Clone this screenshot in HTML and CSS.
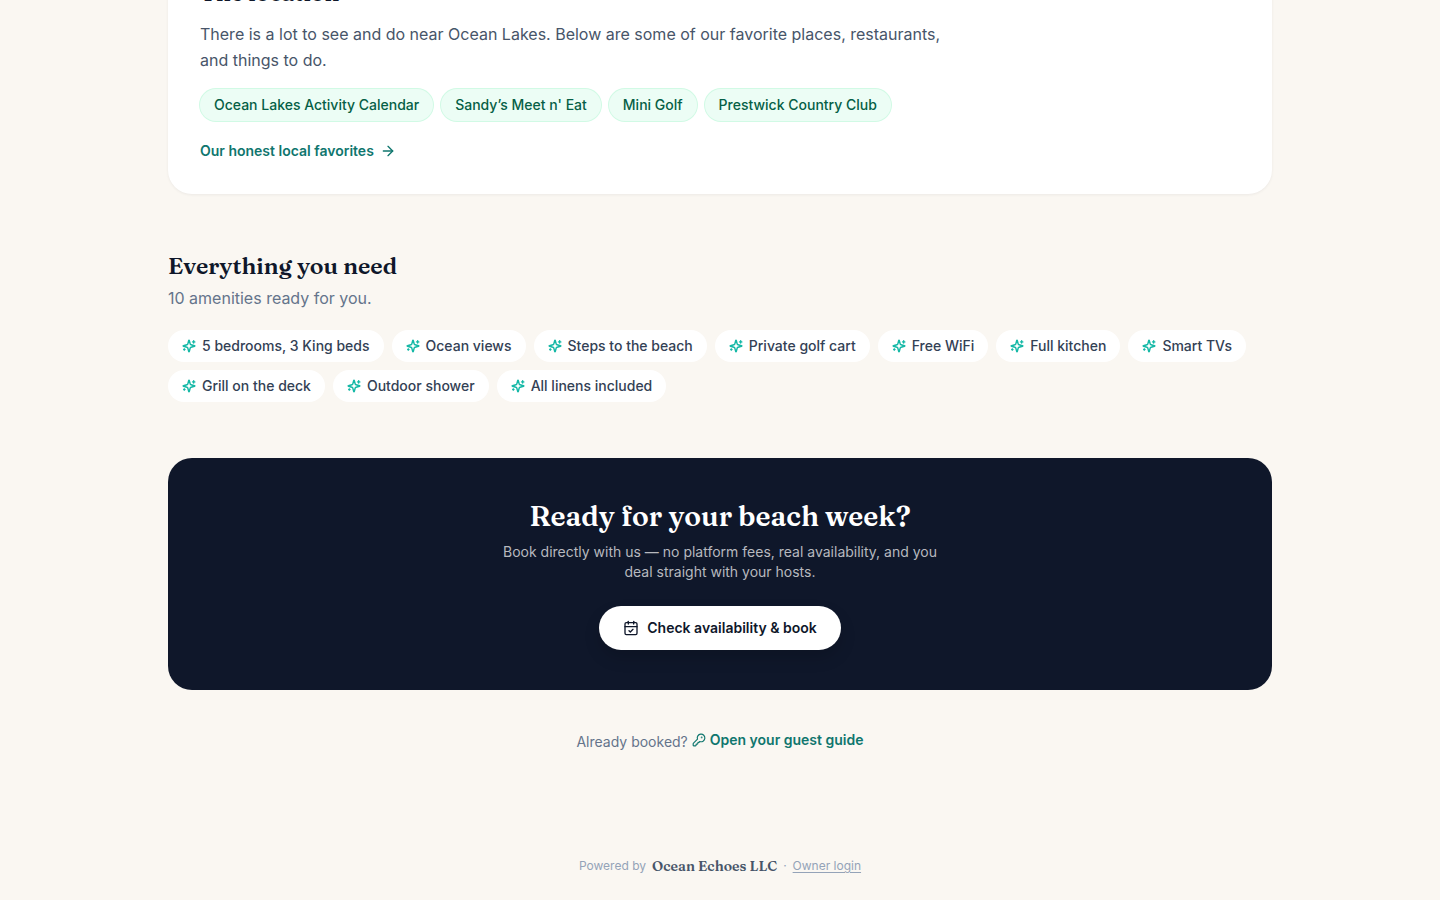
FILE: index.html
```html
<!DOCTYPE html>
<html lang="en">
<head>
    <meta charset="UTF-8">
    <meta name="viewport" content="width=device-width, initial-scale=1.0">
    <title>Ocean Echoes</title>
    <link rel="stylesheet" href="styles.css">
</head>
<body>
    <!-- shared icon shapes -->
    <svg class="sprite" aria-hidden="true">
        <symbol id="sparkles" viewBox="0 0 24 24" stroke-width="2.4">
            <path d="M9.937 15.5A2 2 0 0 0 8.5 14.063l-6.135-1.582a.5.5 0 0 1 0-.962L8.5 9.936A2 2 0 0 0 9.937 8.5l1.582-6.135a.5.5 0 0 1 .963 0L14.063 8.5A2 2 0 0 0 15.5 9.937l6.135 1.581a.5.5 0 0 1 0 .964L15.5 14.063a2 2 0 0 0-1.437 1.437l-1.582 6.135a.5.5 0 0 1-.963 0z"/>
            <path d="M20 3v4"/>
            <path d="M22 5h-4"/>
            <path d="M4 17v2"/>
            <path d="M5 18H3"/>
        </symbol>
    </svg>

    <main class="page">
        <section class="card">
            <h2>The location</h2>
            <p class="card-text">There is a lot to see and do near Ocean Lakes. Below are some of our favorite places, restaurants, and things to do.</p>
            <div class="chips">
                <a class="chip place" href="#">Ocean Lakes Activity Calendar</a>
                <a class="chip place" href="#">Sandy’s Meet n' Eat</a>
                <a class="chip place" href="#">Mini Golf</a>
                <a class="chip place" href="#">Prestwick Country Club</a>
            </div>
            <a class="more" href="#">Our honest local favorites
                <svg class="icon" viewBox="0 0 24 24"><path d="M5 12h14"/><path d="m12 5 7 7-7 7"/></svg>
            </a>
        </section>

        <section>
            <h2>Everything you need</h2>
            <p class="subtitle">10 amenities ready for you.</p>
            <ul class="chips">
                <li class="chip amenity"><svg class="icon"><use href="#sparkles"/></svg>5 bedrooms, 3 King beds</li>
                <li class="chip amenity"><svg class="icon"><use href="#sparkles"/></svg>Ocean views</li>
                <li class="chip amenity"><svg class="icon"><use href="#sparkles"/></svg>Steps to the beach</li>
                <li class="chip amenity"><svg class="icon"><use href="#sparkles"/></svg>Private golf cart</li>
                <li class="chip amenity"><svg class="icon"><use href="#sparkles"/></svg>Free WiFi</li>
                <li class="chip amenity"><svg class="icon"><use href="#sparkles"/></svg>Full kitchen</li>
                <li class="chip amenity"><svg class="icon"><use href="#sparkles"/></svg>Smart TVs</li>
                <li class="chip amenity"><svg class="icon"><use href="#sparkles"/></svg>Grill on the deck</li>
                <li class="chip amenity"><svg class="icon"><use href="#sparkles"/></svg>Outdoor shower</li>
                <li class="chip amenity"><svg class="icon"><use href="#sparkles"/></svg>All linens included</li>
            </ul>
        </section>

        <section class="cta">
            <h2>Ready for your beach week?</h2>
            <p>Book directly with us — no platform fees, real availability, and you deal straight with your hosts.</p>
            <a class="button" href="#">
                <svg class="icon" viewBox="0 0 24 24"><path d="M8 2v4"/><path d="M16 2v4"/><rect width="18" height="18" x="3" y="4" rx="2"/><path d="M3 10h18"/><path d="m9 16 2 2 4-4"/></svg>
                Check availability &amp; book
            </a>
        </section>

        <p class="booked">Already booked?
            <a class="guide" href="#"><svg class="icon" viewBox="0 0 24 24"><path d="M2.586 17.414A2 2 0 0 0 2 18.828V21a1 1 0 0 0 1 1h3a1 1 0 0 0 1-1v-1a1 1 0 0 1 1-1h1a1 1 0 0 0 1-1v-1a1 1 0 0 1 1-1h.172a2 2 0 0 0 1.414-.586l.814-.814a6.5 6.5 0 1 0-4-4z"/><circle class="dot" cx="16.5" cy="7.5" r=".5"/></svg>Open your guest guide</a>
        </p>
    </main>

    <footer class="footer">
        <span>Powered by</span>
        <span class="brand">Ocean Echoes LLC</span>
        <span>·</span>
        <a href="#">Owner login</a>
    </footer>
</body>
</html>
```
FILE: styles.css
```css
* {
    box-sizing: border-box;
}
body {
    margin: 0;
    background-color: #faf7f2;
    color: #0f172a;
    font-family: Inter, sans-serif;
    font-size: 14px;
    line-height: 20px;
}
h2, p, ul {
    margin: 0;
    padding: 0;
}
h2 {
    font-family: Fraunces, "Liberation Serif", serif;
    font-size: 23px;
    line-height: 32px;
    font-weight: 600;
}
a {
    color: inherit;
    text-decoration: none;
}
.sprite {
    display: none;
}
.icon {
    width: 14px;
    height: 14px;
    flex-shrink: 0;
    fill: none;
    stroke: currentColor;
    stroke-width: 2;
    stroke-linecap: round;
    stroke-linejoin: round;
}
.page {
    max-width: 1152px;
    margin: 0 auto;
    padding: 0 24px;
    display: flex;
    flex-direction: column;
    gap: 56px;
}
.card {
    margin-top: -55px; /* the card starts above the fold */
    padding: 32px 32px 33px;
    border-radius: 24px;
    background-color: white;
    box-shadow: 0 1px 3px rgba(15, 23, 42, 0.06);
}
.card-text {
    max-width: 768px;
    margin: 12px 0 16px;
    color: #475569;
    font-size: 16px;
    line-height: 26px;
}
.chips {
    display: flex;
    flex-wrap: wrap;
    gap: 8px;
    list-style: none;
}
.chip {
    display: flex;
    align-items: center;
    gap: 6px;
    padding: 6px 14px;
    border-radius: 16px;
    font-weight: 500;
}
.place {
    background-color: #ecfdf5;
    color: #065f46;
    box-shadow: 0 0 0 1px #d1fae5;
}
.more {
    display: inline-flex;
    align-items: center;
    gap: 6px;
    margin-top: 20px;
    color: #0f766e;
    font-weight: 600;
    vertical-align: top;
}
.more .icon, .button .icon {
    width: 16px;
    height: 16px;
}
.subtitle {
    margin: 4px 0 20px;
    color: #64748b;
    font-size: 16px;
    line-height: 24px;
}
.amenity {
    background-color: white;
    color: #334155;
}
.amenity .icon {
    color: #14b8a6;
}
.cta {
    padding: 40px;
    border-radius: 24px;
    background-color: #0f172a;
    text-align: center;
}
.cta h2 {
    color: white;
    font-size: 28px;
    line-height: 36px;
}
.cta p {
    max-width: 448px;
    margin: 8px auto 24px;
    color: #b7b9bf;
}
.button {
    display: inline-flex;
    align-items: center;
    gap: 8px;
    padding: 12px 24px;
    border-radius: 22px;
    background-color: white;
    color: #0f172a;
    font-weight: 600;
    vertical-align: top;
    box-shadow: 0 8px 16px rgba(0, 0, 0, 0.15);
}
.booked {
    margin-top: -16px;
    color: #64748b;
    text-align: center;
}
.guide {
    display: inline-flex;
    align-items: center;
    gap: 4px;
    color: #0f766e;
    font-weight: 600;
}
.dot {
    fill: currentColor;
}
.footer {
    display: flex;
    justify-content: center;
    align-items: center;
    gap: 6px;
    padding: 104px 24px 24px;
    color: #94a3b8;
    font-size: 12px;
}
.footer a {
    text-decoration: underline;
    text-underline-offset: 2px;
}
.brand {
    color: #475569;
    font-family: Fraunces, "Liberation Serif", serif;
    font-size: 14px;
    font-weight: 600;
}
```
